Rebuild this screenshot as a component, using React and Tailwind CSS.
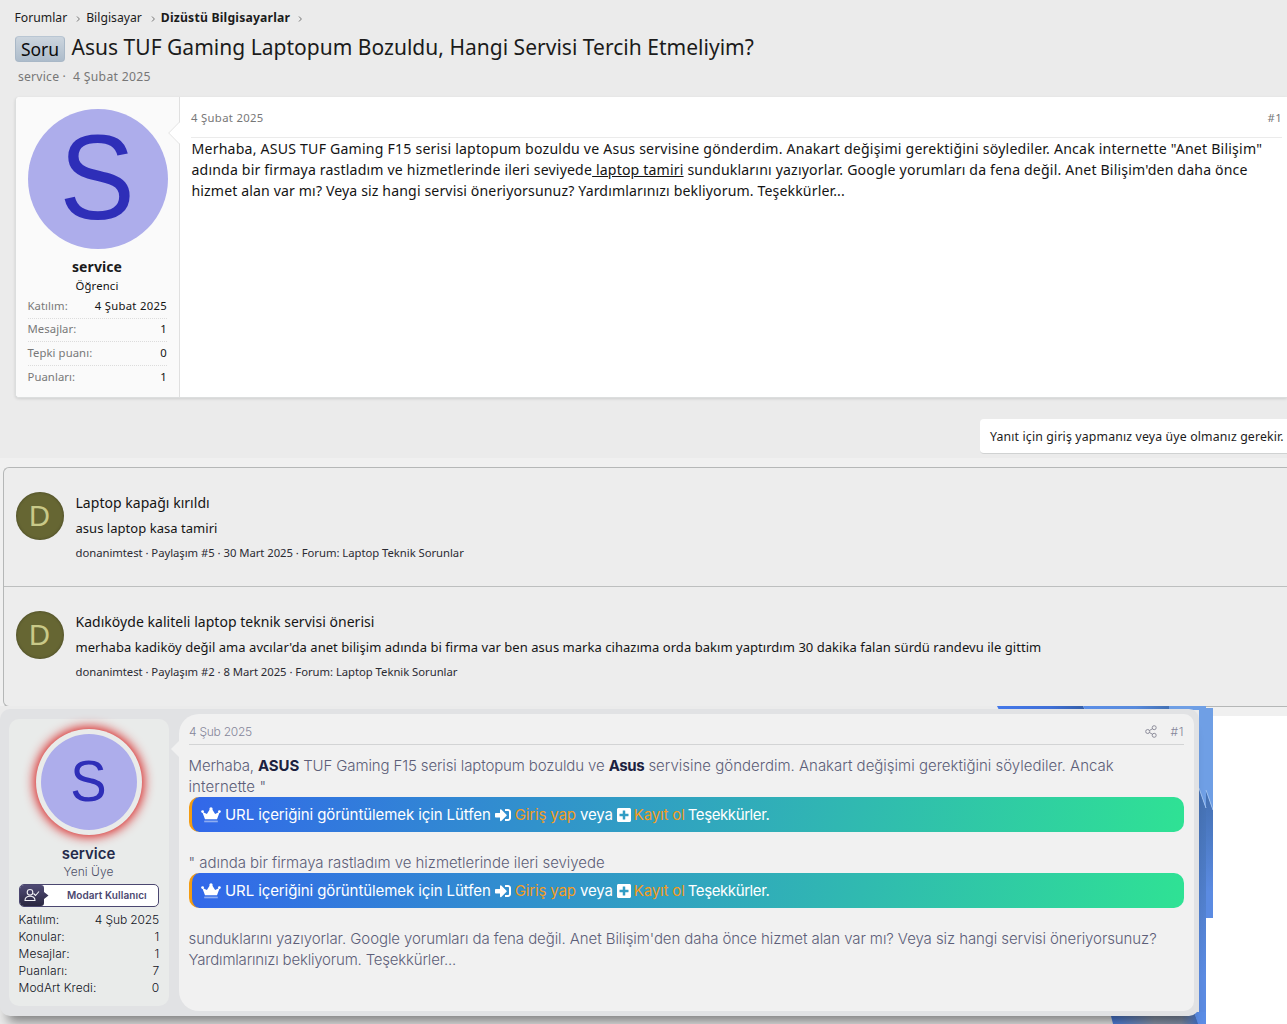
import React from 'react';
import { FaPlusSquare, FaSignInAlt } from 'react-icons/fa';

const stats = [
  { label: 'Katılım:', value: '4 Şubat 2025' },
  { label: 'Mesajlar:', value: '1' },
  { label: 'Tepki puanı:', value: '0' },
  { label: 'Puanları:', value: '1' },
];

const memberStats = [
  { label: 'Katılım:', value: '4 Şub 2025' },
  { label: 'Konular:', value: '1' },
  { label: 'Mesajlar:', value: '1' },
  { label: 'Puanları:', value: '7' },
  { label: 'ModArt Kredi:', value: '0' },
];

const results = [
  {
    title: 'Laptop kapağı kırıldı',
    snippet: 'asus laptop kasa tamiri',
    meta: 'donanimtest · Paylaşım #5 · 30 Mart 2025 · Forum: Laptop Teknik Sorunlar',
  },
  {
    title: 'Kadıköyde kaliteli laptop teknik servisi önerisi',
    snippet: "merhaba kadiköy değil ama avcılar'da anet bilişim adında bi firma var ben asus marka cihazıma orda bakım yaptırdım 30 dakika falan sürdü randevu ile gittim",
    meta: 'donanimtest · Paylaşım #2 · 8 Mart 2025 · Forum: Laptop Teknik Sorunlar',
  },
];

const Chevron = () => (
  <svg width="5" height="8" viewBox="0 0 5 8" className="mt-px shrink-0">
    <path d="M1 1.5l2.4 2.5L1 6.5" fill="none" stroke="#777" strokeWidth="1" />
  </svg>
);

const Crown = () => (
  <svg width="20" height="16" viewBox="0 0 20 16" fill="#fff" className="mr-[4px] shrink-0">
    <circle cx="10" cy="1.8" r="1.6" />
    <circle cx="1.6" cy="4.6" r="1.4" />
    <circle cx="18.4" cy="4.6" r="1.4" />
    <path d="M1.2 4.8l4.7 2.2L9 2h2l3.1 5 4.7-2.2L16 12.200H4z" />
    <path d="M3.2 13.6h13.6v1.700H3.2z" opacity=".45" />
  </svg>
);

const ThreadPost = () => (
  <div className="ml-[15px] mt-[11px] flex h-[301px] rounded-l-[4px] border-b border-l border-[#dcdede] bg-white shadow-[0_1px_3px_rgba(0,0,0,0.12)]">
    <aside className="relative w-[164px] shrink-0 rounded-l-[4px] border-r border-[#e0e0e0] bg-[#fafafa] pl-[12px] pr-[11px] pt-[12px]">
      <div className="flex size-[140px] items-center justify-center rounded-full bg-[#adadeb] font-['Liberation_Sans',sans-serif] text-[120px] leading-none text-[#2e2eb8]">
        <span className="mt-[-4px] ml-[-2px] scale-x-[.94]">S</span>
      </div>
      <h4 className="mt-[8px] pr-[2px] text-center text-[14px] font-bold leading-[20px] tracking-[.1px] text-[#1b1b1b]">service</h4>
      <h5 className="pr-[2px] text-center text-[11.3px] leading-[18px] tracking-[.15px] text-[#141414]">Öğrenci</h5>
      <dl className="-ml-[.5px] w-[139.5px] text-[11.3px]">
        {stats.map((s) => (
          <div key={s.label} className="flex h-[23.6px] items-center justify-between border-b border-dotted border-[#dcdcdc] last:border-0">
            <dt className="tracking-[.07px] text-[#787878]">{s.label}</dt>
            <dd className="tracking-[.3px] text-[#141414]">{s.value}</dd>
          </div>
        ))}
      </dl>
      {/* speech arrow pointing at the avatar */}
      <svg className="absolute right-[-1px] top-[25px]" width="12" height="22" viewBox="0 0 12 22">
        <path d="M12 0L1 11l11 11z" fill="#fff" />
        <path d="M11.5 0L.7 11l10.8 11" fill="none" stroke="#e4e4e4" />
      </svg>
    </aside>
    <div className="min-w-0 flex-1 pl-[11px] pr-[5px]">
      <header className="flex h-[41px] items-center justify-between border-b border-[#ebebeb] pt-[2px] text-[11.3px] tracking-[.32px] text-[#777]">
        <span>4 Şubat 2025</span>
        <span>#1</span>
      </header>
      <p className="ml-[.5px] whitespace-nowrap text-[14.1px] leading-[21px] text-[#141414]">
        <span className="tracking-[.21px]">Merhaba, ASUS TUF Gaming F15 serisi laptopum bozuldu ve Asus servisine gönderdim. Anakart değişimi gerektiğini söylediler. Ancak internette "Anet Bilişim"</span><br />
        <span className="tracking-[.17px]">adında bir firmaya rastladım ve hizmetlerinde ileri seviyede<span className="underline"> laptop tamiri</span> sunduklarını yazıyorlar. Google yorumları da fena değil. Anet Bilişim'den daha önce</span><br />
        <span className="tracking-[.13px]">hizmet alan var mı? Veya siz hangi servisi öneriyorsunuz? Yardımlarınızı bekliyorum. Teşekkürler...</span>
      </p>
    </div>
  </div>
);

const ResultRow = ({ item }) => (
  <li className="flex h-[119px] border-b border-[#bdbfbf] pl-[12px] pt-[24px] last:border-0">
    <div className="flex size-[48px] shrink-0 items-center justify-center rounded-full bg-[#666633] pr-px font-['Liberation_Sans',sans-serif] text-[29px] leading-none text-[#c9c988] shadow-[inset_0_0_3px_rgba(0,0,0,0.35)]">
      D
    </div>
    <div className="ml-[11.5px] whitespace-nowrap">
      <h3 className="text-[14px] leading-[22px] tracking-[.03px] text-[#141414]">{item.title}</h3>
      <p className="mt-[2px] text-[13px] leading-[24px] tracking-[.04px] text-[#141414]">{item.snippet}</p>
      <p className="text-[11.3px] leading-[25px] tracking-[-.04px] text-[#2b2b33]">{item.meta}</p>
    </div>
  </li>
);

const LoginBar = () => (
  <div className="flex h-[35px] items-center rounded-[10px] border-l-[3px] border-[#f39c12] bg-[linear-gradient(100deg,#3267ea,#2fe294)] pl-[9px] text-[15px] font-normal tracking-[-.14px] text-white">
    <Crown />
    <span className="tracking-[-.09px]">URL içeriğini görüntülemek için Lütfen</span>
    <FaSignInAlt className="mx-[4px] size-[16px]" />
    <span className="text-[#f39c22]">Giriş yap</span>
    <span className="ml-[4px]">veya</span>
    <FaPlusSquare className="ml-[4px] mr-[3px] h-[16px] w-[14px]" />
    <span className="text-[#f39c22]">Kayıt ol</span>
    <span className="ml-[3px] tracking-[-.4px]">Teşekkürler.</span>
  </div>
);

const ShareIcon = () => (
  <svg width="12" height="13" viewBox="0 0 12 13" fill="none" stroke="#8d8d9b">
    <circle cx="2.7" cy="6.5" r="2" />
    <circle cx="9.2" cy="2.7" r="2" />
    <circle cx="9.2" cy="10.3" r="2" />
    <path d="M4.5 5.5l3-1.8M4.5 7.5l3 1.8" />
  </svg>
);

const Backdrop = () => (
  <svg className="absolute left-0 top-0" width="1213" height="318" viewBox="0 0 1213 318">
    <defs>
      <linearGradient id="deep" x1="0" x2="1" y1="0" y2="0">
        <stop offset="0" stopColor="#4478ea" />
        <stop offset=".6" stopColor="#4070d8" />
        <stop offset="1" stopColor="#345fa9" />
      </linearGradient>
      <linearGradient id="mid" x1="0" x2="1" y1="0" y2="0">
        <stop offset="0" stopColor="#5c8fe8" />
        <stop offset=".6" stopColor="#588adc" />
        <stop offset="1" stopColor="#416fb2" />
      </linearGradient>
      <linearGradient id="fold" x1="0" x2="0" y1="0" y2="1">
        <stop offset="0" stopColor="#4470b1" />
        <stop offset=".35" stopColor="#4d7bc5" />
        <stop offset=".8" stopColor="#5b8be2" />
        <stop offset="1" stopColor="#5b8be2" />
      </linearGradient>
      <linearGradient id="base" x1="0" x2="1" y1="0" y2="0">
        <stop offset="0" stopColor="#4a7fe6" />
        <stop offset=".5" stopColor="#8c99ad" />
        <stop offset=".8" stopColor="#8795ae" />
        <stop offset="1" stopColor="#3864b4" />
      </linearGradient>
    </defs>
    <rect width="1206" height="318" fill="#ebebeb" />
    <path d="M997 0h86l2 4h-86z" fill="url(#deep)" />
    <path d="M1083 0h86l2 4h-86z" fill="url(#mid)" />
    <path d="M1169 0h37v2h7v90h-14V4h-30z" fill="#6f9fe5" />
    <path d="M1199 82l7 20v216h-7z" fill="url(#fold)" />
    <path d="M1206 84l7 20v108h-7z" fill="url(#fold)" />
    <path d="M1199 82l7 20V82zM1206 84l7 20V84z" fill="#6f9fe5" />
    <path d="M1199 82l7 20M1206 84l7 20" stroke="#9dc0f0" strokeWidth="1" />
    <path d="M1110 306h84l5 12h-86z" fill="url(#base)" />
    <path d="M1194 306h12v12h-8z" fill="#5b8de6" />
  </svg>
);

const MemberCard = () => (
  <aside className="ml-[9px] mt-[10px] h-[287px] w-[160px] shrink-0 rounded-[10px] bg-[#e9ebea] px-[10px] pt-[10px]">
    <div className="mx-auto flex size-[106px] items-center justify-center rounded-full bg-[#e9ebea] shadow-[0_0_11px_2px_#d82020]">
      <div className="flex size-[96px] items-center justify-center rounded-full bg-[#adadeb] font-['Liberation_Sans',sans-serif] text-[58px] leading-none text-[#2e2eb8]">
        <span className="mt-[-2px] ml-[-1px] scale-x-[.94]">S</span>
      </div>
    </div>
    <h4 className="mt-[9px] -translate-x-[.5px] text-center text-[15px] font-semibold leading-[20px] text-[#242a4a]">service</h4>
    <h5 className="-translate-x-[.5px] text-center text-[12px] font-light leading-[16px] tracking-[.05px] text-[#4d5068]">Yeni Üye</h5>
    <div className="mt-[4px] flex h-[23px] w-[140px] overflow-hidden rounded-[5px] border border-[#4b4770] bg-white">
      <svg width="29" height="21" viewBox="0 0 29 21" className="shrink-0">
        <defs>
          <linearGradient id="badge" x1="0" x2="0" y1="0" y2="1">
            <stop offset="0" stopColor="#4f4a74" />
            <stop offset="1" stopColor="#2a2740" />
          </linearGradient>
        </defs>
        <path d="M0 0h21q3 0 3 3v4l4.500 3.500-4.500 3.500v4q0 3-3 3H0z" fill="url(#badge)" />
        <g fill="none" stroke="#f2f2f6" strokeWidth="1.1">
          <circle cx="10" cy="7.3" r="2.8" />
          <path d="M5 15.500c0-3 2-4.200 5-4.200s5 1.200 5 4.200zM13.500 8.500l2 2 3.500-4" />
        </g>
      </svg>
      <span className="ml-[18px] text-[10px] font-semibold leading-[21px] tracking-[.08px] text-[#4b4770]">Modart Kullanıcı</span>
    </div>
    <dl className="-ml-[.5px] mt-[4px] text-[12px] font-light leading-[17px] text-[#11131d]">
      {memberStats.map((s) => (
        <div key={s.label} className="flex justify-between">
          <dt className="tracking-[.08px]">{s.label}</dt>
          <dd className="tracking-[-.13px]">{s.value}</dd>
        </div>
      ))}
    </dl>
  </aside>
);

const MemberPost = () => (
  <section className="relative h-[318px] font-[Inter,sans-serif]">
    <Backdrop />
    <div className="relative h-full w-[1206px] overflow-hidden pt-[3px]">
      <div className="flex h-[307px] w-[1199px] rounded-[10px] bg-[#e1e2e4] shadow-[0_14px_12px_-8px_rgba(0,0,0,0.45)]">
        <MemberCard />
        <div className="relative ml-[10px] mt-[5px] h-[297px] w-[1015px] rounded-l-[20px] rounded-r-[10px] bg-[#f1f1f1] pl-[10px] pr-[10px]">
          <svg className="absolute left-[-8px] top-[26px]" width="9" height="18" viewBox="0 0 9 18">
            <path d="M9 0v18L0 9z" fill="#f1f1f1" />
          </svg>
          <header className="flex h-[31px] items-center border-b border-[#d3d4d5] pt-[5px] text-[12px] font-light text-[#85869a]">
            <span className="flex-1 tracking-[-.25px]">4 Şub 2025</span>
            <ShareIcon />
            <span className="ml-[13px] tracking-[.6px]">#1</span>
          </header>
          <div className="whitespace-nowrap pt-[10px] text-[15px] font-light leading-[21px] tracking-[-.06px] text-[#5c5e78]">
            <p className="-ml-[.5px]">
              <span className="tracking-[-.13px]">Merhaba, <b className="font-bold text-[#1b2140]">ASUS</b> TUF Gaming F15 serisi laptopum bozuldu ve </span><b className="font-bold tracking-[-.4px] text-[#1b2140]">Asus</b> <span className="tracking-[0px]">servisine gönderdim. Anakart değişimi gerektiğini söylediler. Ancak</span><br />
              <span className="tracking-[.1px]">internette "</span>
            </p>
            <LoginBar />
            <p className="-ml-[.5px] mt-[20px] tracking-[-.04px]">" adında bir firmaya rastladım ve hizmetlerinde ileri seviyede</p>
            <LoginBar />
            <p className="-ml-[.5px] mt-[20px] tracking-[-.08px]">
              sunduklarını yazıyorlar. Google yorumları da fena değil. Anet Bilişim'den daha önce hizmet alan var mı? Veya siz hangi servisi öneriyorsunuz?<br />
              <span className="tracking-[-.19px]">Yardımlarınızı bekliyorum. Teşekkürler...</span>
            </p>
          </div>
        </div>
      </div>
    </div>
  </section>
);

export default function App() {
  return (
    <div className="h-[1024px] w-[1287px] overflow-hidden bg-white font-['Noto_Sans',sans-serif]">
      <section className="h-[458px] bg-[#ebebeb] pt-[8px]">
        <nav className="ml-[14.5px] flex h-[20px] items-center text-[12.2px] text-[#1b1b1b]">
          <span>Forumlar</span>
          <span className="mx-[5px] ml-[9px]"><Chevron /></span>
          <span>Bilgisayar</span>
          <span className="mx-[5px] ml-[9px]"><Chevron /></span>
          <span className="font-bold tracking-[.2px]">Dizüstü Bilgisayarlar</span>
          <span className="ml-[8px]"><Chevron /></span>
        </nav>
        <h1 className="ml-[15px] mt-[8px] flex h-[26px] items-center text-[21px] text-[#1b1b1b]">
          <span className="mr-[6.5px] flex h-[26px] w-[50px] items-center justify-center rounded-[4px] border border-[#a9b8c7] border-t-[#b9c6d3] bg-linear-to-b from-[#ccd5de] to-[#adbccb] text-[17.5px] text-[#0c0c0c]">Soru</span>
          <span className="-mt-[2px] whitespace-nowrap tracking-[.02px]">Asus TUF Gaming Laptopum Bozuldu, Hangi Servisi Tercih Etmeliyim?</span>
        </h1>
        <div className="ml-[18px] mt-[6px] flex h-[18px] items-center text-[12.2px] text-[#777]">
          <span className="tracking-[.2px]">service ·</span>
          <span className="ml-[7px] tracking-[.3px]">4 Şubat 2025</span>
        </div>
        <ThreadPost />
        <div className="ml-[980px] mt-[21px] h-[35px] whitespace-nowrap rounded-l-[4px] border-b border-[#d0d2d2] bg-white pl-[10px] text-[12.3px] leading-[35px] tracking-[.15px] text-[#1b1b1b]">
          Yanıt için giriş yapmanız veya üye olmanız gerekir.
        </div>
      </section>
      <section className="h-[248px] bg-[#f0f0f0] pt-[9px]">
        <ul className="ml-[3px] h-[240px] rounded-l-[6px] border-y border-l border-[#b5b7b7] bg-[#ededed]">
          {results.map((r) => (
            <ResultRow key={r.title} item={r} />
          ))}
        </ul>
        <div className="h-[9px] bg-[#f0f0f0]" />
      </section>
      <MemberPost />
    </div>
  );
}
